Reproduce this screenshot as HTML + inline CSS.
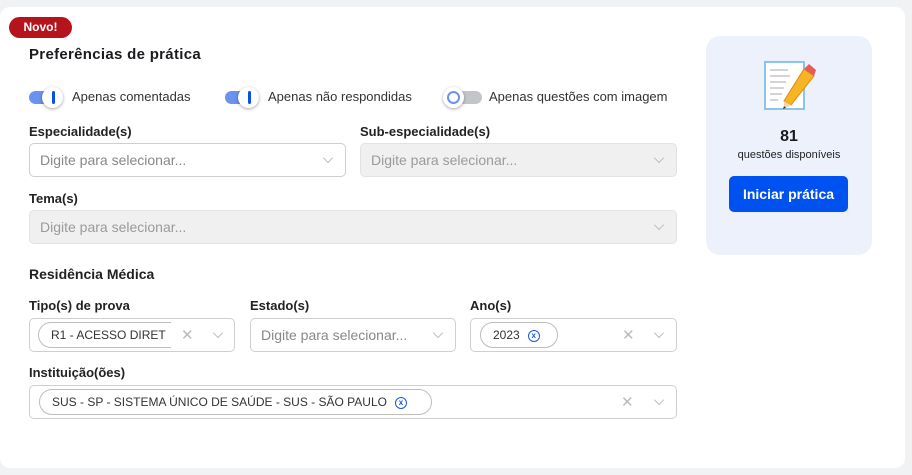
<!DOCTYPE html>
<html><head><meta charset="utf-8"><style>
*{box-sizing:border-box;margin:0;padding:0}
body{width:912px;height:475px;background:#f1f2f4;font-family:"Liberation Sans",sans-serif;position:relative;overflow:hidden;color:#1b1b1f}
.card{position:absolute;left:0;top:7px;width:905px;height:461px;background:#fff;border-radius:10px}
.a{position:absolute}
.badge{left:9px;top:17px;width:63px;height:21px;background:#b5141c;color:#fff;border-radius:11px;font-size:12px;font-weight:bold;text-align:center;line-height:21px}
.title{left:29px;top:46px;font-size:15px;font-weight:bold;letter-spacing:.3px}
.lbl{font-size:13px;font-weight:bold;color:#222}
.tg{font-size:13px;color:#333}
.track{position:absolute;width:34px;height:13px;border-radius:7px}
.knob{position:absolute;width:21px;height:21px;border-radius:50%;background:#fff;box-shadow:0 1px 3px rgba(0,0,0,.35)}
.inp{position:absolute;height:34px;border:1px solid #cfcfd3;border-radius:5px;background:#fff;font-size:14px;color:#888}
.inp.dis{background:#f0f0f0;border-color:#e2e2e2;color:#9a9a9a}
.ph{position:absolute;left:10px;top:8px}
.chev{position:absolute;top:12px;width:8px;height:8px;border-right:1.3px solid #b8b8b8;border-bottom:1.3px solid #b8b8b8;transform:rotate(45deg) scale(.9)}
.x{position:absolute;top:7px;color:#bbb;font-size:15px}
.chip{position:absolute;top:3px;height:26px;border:1px solid #bdbdbd;border-radius:13px;font-size:12px;color:#333;line-height:24px;padding-left:12px;white-space:nowrap;overflow:hidden}
.cx{display:inline-block;width:12px;height:12px;border:1.3px solid #1957e6;border-radius:50%;color:#1957e6;font-size:8px;line-height:9px;text-align:center;font-weight:bold;vertical-align:middle;margin-left:8px}
</style></head><body>
<div class="card"></div>
<div class="a badge">Novo!</div>
<div class="a title">Preferências de prática</div>

<div class="track" style="left:29px;top:91px;background:#6b92ee"></div>
<div class="knob" style="left:42px;top:87px"></div><div class="a" style="left:52px;top:91px;width:3px;height:13px;background:#0a4fe8;border-radius:2px"></div>
<div class="a tg" style="left:72px;top:89px">Apenas comentadas</div>
<div class="track" style="left:225px;top:91px;background:#6b92ee"></div>
<div class="knob" style="left:238px;top:87px"></div><div class="a" style="left:248px;top:91px;width:3px;height:13px;background:#0a4fe8;border-radius:2px"></div>
<div class="a tg" style="left:268px;top:89px">Apenas não respondidas</div>
<div class="track" style="left:448px;top:91px;background:#c4c5c8"></div>
<div class="knob" style="left:443px;top:87px"></div><div class="a" style="left:447px;top:91px;width:13px;height:13px;border:2px solid #6b92ee;border-radius:50%"></div>
<div class="a tg" style="left:489px;top:89px">Apenas questões com imagem</div>

<div class="a lbl" style="left:29px;top:124px">Especialidade(s)</div>
<div class="a lbl" style="left:360px;top:124px">Sub-especialidade(s)</div>
<div class="inp" style="left:29px;top:143px;width:317px"><span class="ph">Digite para selecionar...</span><i class="chev" style="left:294px;top:10px"></i></div>
<div class="inp dis" style="left:360px;top:143px;width:317px"><span class="ph">Digite para selecionar...</span><i class="chev" style="left:294px;top:10px"></i></div>

<div class="a lbl" style="left:29px;top:191px">Tema(s)</div>
<div class="inp dis" style="left:29px;top:210px;width:648px"><span class="ph">Digite para selecionar...</span><i class="chev" style="left:625px;top:10px"></i></div>

<div class="a lbl" style="left:29px;top:266px;font-size:14px">Residência Médica</div>

<div class="a lbl" style="left:29px;top:298px">Tipo(s) de prova</div>
<div class="a lbl" style="left:250px;top:298px">Estado(s)</div>
<div class="a lbl" style="left:470px;top:298px">Ano(s)</div>
<div class="inp" style="left:29px;top:318px;width:206px"><div class="chip" style="left:8px;width:133px;border-right:none;border-radius:13px 0 0 13px">R1 - ACESSO DIRET</div><span class="x" style="left:151px">✕</span><i class="chev" style="left:184px;top:10px"></i></div>
<div class="inp" style="left:250px;top:318px;width:206px"><span class="ph">Digite para selecionar...</span><i class="chev" style="left:183px;top:10px"></i></div>
<div class="inp" style="left:470px;top:318px;width:207px"><div class="chip" style="left:9px;width:78px">2023<span class="cx">x</span></div><span class="x" style="left:151px">✕</span><i class="chev" style="left:184px;top:10px"></i></div>

<div class="a lbl" style="left:29px;top:365px">Instituição(ões)</div>
<div class="inp" style="left:29px;top:385px;width:648px"><div class="chip" style="left:9px;width:393px">SUS - SP - SISTEMA ÚNICO DE SAÚDE - SUS - SÃO PAULO<span class="cx">x</span></div><span class="x" style="left:591px">✕</span><i class="chev" style="left:625px;top:10px"></i></div>

<div class="a" style="left:706px;top:36px;width:166px;height:219px;background:#edf1fc;border-radius:14px"></div>
<svg class="a" style="left:764px;top:61px" width="52" height="50" viewBox="0 0 52 50">
<rect x="1" y="1" width="39" height="47" fill="#fff" stroke="#8cc4ee" stroke-width="2"/>
<g stroke="#aaa" stroke-width="1"><line x1="6" y1="9" x2="24" y2="9"/><line x1="6" y1="15" x2="26" y2="15"/><line x1="6" y1="21" x2="22" y2="21"/><line x1="6" y1="27" x2="20" y2="27"/><line x1="6" y1="33" x2="18" y2="33"/><line x1="6" y1="39" x2="14" y2="39"/></g>
<polygon points="40,8 50,15 27,44 20,40" fill="#f7b524" stroke="#e08a10" stroke-width="1"/>
<polygon points="40,8 45,3 52,9 50,15" fill="#e85a5a"/>
<polygon points="20,40 27,44 20,48" fill="#f1d6a6"/><polygon points="20,45 22,47 19,48" fill="#333"/>
</svg>
<div class="a" style="left:706px;top:128px;width:166px;text-align:center;font-size:16px;font-weight:bold">81</div>
<div class="a" style="left:706px;top:149px;width:166px;text-align:center;font-size:11px;color:#222">questões disponíveis</div>
<div class="a" style="left:729px;top:176px;width:119px;height:36px;background:#0052f0;border-radius:5px;color:#fff;font-size:14px;font-weight:bold;text-align:center;line-height:36px">Iniciar prática</div>
</body></html>
